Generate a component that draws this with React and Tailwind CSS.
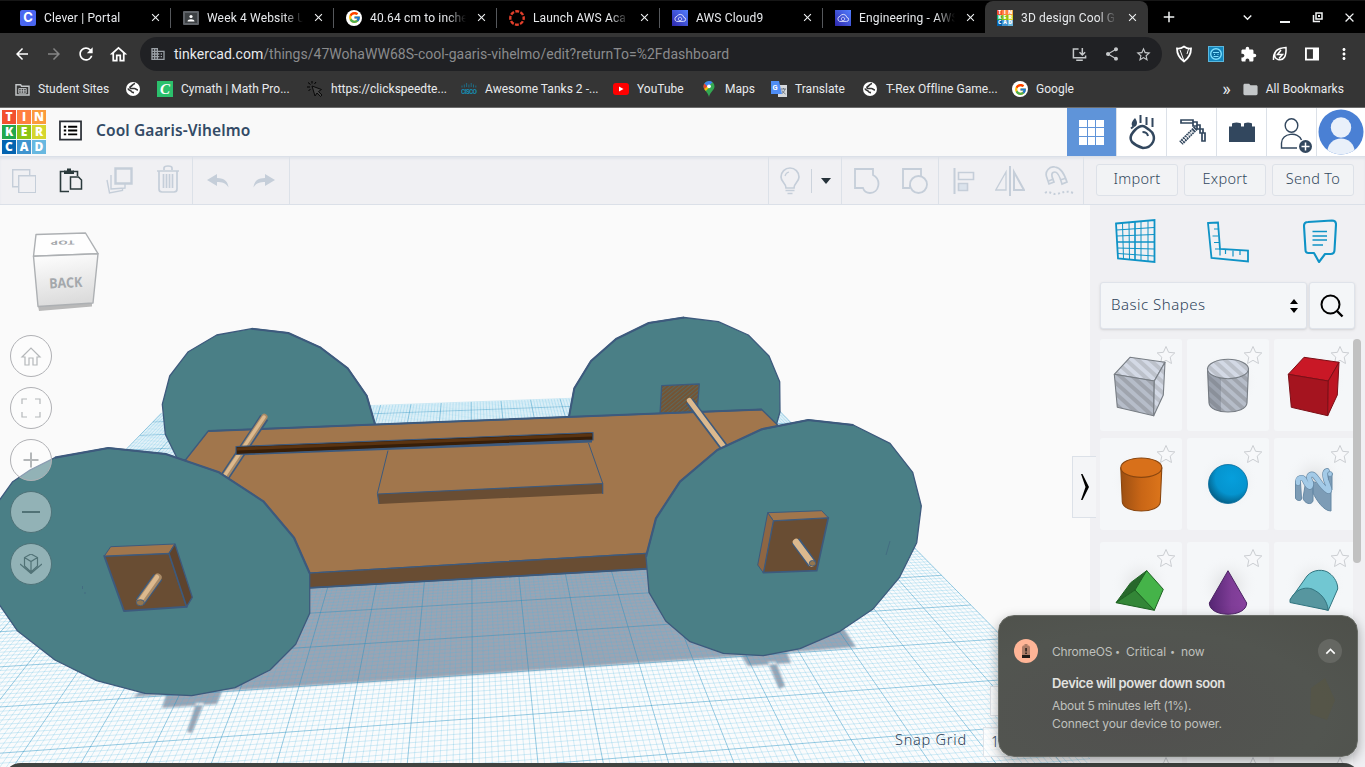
import React from "react";
import { FcGoogle } from "react-icons/fc";
import {
  MdArrowBack, MdArrowForward, MdRefresh, MdOutlineHome, MdDomain, MdShare,
  MdStarBorder, MdExtension, MdFolder, MdMoreVert, MdClose, MdAdd,
  MdKeyboardArrowDown, MdKeyboardArrowUp,
} from "react-icons/md";

const TILES = [
  ["T", "bg-[#f2502f]"], ["I", "bg-[#ff7f3f]"], ["N", "bg-[#fb9b3c]"],
  ["K", "bg-[#22a84c]"], ["E", "bg-[#8cc414]"], ["R", "bg-[#d6d62e]"],
  ["C", "bg-[#0464b0]"], ["A", "bg-[#3f94cf]"], ["D", "bg-[#68b8e0]"],
];

function TinkerLogo({ small }) {
  return (
    <div className={small ? "grid h-4 w-4 grid-cols-3" : "grid h-[44px] w-[44px] grid-cols-3 gap-px"}>
      {TILES.map(([c, bg]) => (
        <div key={c} className={`${bg} flex items-center justify-center font-['Open_Sans',sans-serif] font-extrabold text-white ${small ? "text-[5px] leading-[5px]" : "text-[12px] leading-none"}`}>
          {c}
        </div>
      ))}
    </div>
  );
}

function CloudFav() {
  return (
    <svg viewBox="0 0 16 16" className="h-4 w-4">
      <defs><linearGradient id="aws" x1="0" y1="1" x2="1" y2="0"><stop offset="0" stopColor="#2e27ad" /><stop offset="1" stopColor="#527fff" /></linearGradient></defs>
      <rect width="16" height="16" fill="url(#aws)" />
      <path d="M4.600 11.400h6.800a2 2 0 0 0 .4-4 3.600 3.600 0 0 0-6.800-1 2.600 2.600 0 0 0-.4 5z" fill="none" stroke="#e8ebff" strokeWidth="0.9" />
      <path d="M8 7l1.600 1v1.800L8 10.800 6.400 9.800V8z" fill="none" stroke="#e8ebff" strokeWidth="0.7" />
    </svg>
  );
}

const favs = {
  clever: (
    <div className="flex h-4 w-4 items-center justify-center rounded-[2px] bg-[#4a66f0] font-['Inter',sans-serif] text-[13px] font-bold leading-none text-white">C</div>
  ),
  classroom: (
    <svg viewBox="0 0 16 16" className="h-4 w-4"><rect y="1" width="16" height="14" rx="1" fill="#5f6368" /><rect x="2" y="3" width="12" height="10" fill="#3c4043" /><circle cx="8" cy="6.500" r="1.600" fill="#fff" /><path d="M4.500 11.500c0-3 7-3 7 0z" fill="#fff" /></svg>
  ),
  google: (
    <div className="flex h-4 w-4 items-center justify-center rounded-full bg-white"><FcGoogle size={13} /></div>
  ),
  canvas: (
    <svg viewBox="0 0 16 16" className="h-4 w-4"><circle cx="8" cy="8" r="6.700" fill="none" stroke="#e13f2b" strokeWidth="2.400" strokeDasharray="3.900 1.360" strokeDashoffset="1.900" /></svg>
  ),
  aws: <CloudFav />,
  tinker: <TinkerLogo small />,
};

const TABS = [
  ["clever", "Clever | Portal"], ["classroom", "Week 4 Website U"], ["google", "40.64 cm to inche"],
  ["canvas", "Launch AWS Aca"], ["aws", "AWS Cloud9"], ["aws", "Engineering - AWS"], ["tinker", "3D design Cool G"],
];

function Tab({ fav, title, active, divider }) {
  return (
    <div className={`flex h-[33px] w-[163px] items-center ${active ? "-ml-px rounded-t-[8px] bg-[#353535] pl-3" : "pl-3"}`}>
      <div className="shrink-0">{favs[fav]}</div>
      <div className="ml-2 w-[96px] whitespace-nowrap text-[12px] tracking-[0.15px] text-[#e8eaed] [mask-image:linear-gradient(to_right,#000_80%,transparent)]">{title}</div>
      <MdClose size={13} className="ml-[9px] text-[#f1f3f4]" />
      {divider && <div className="ml-auto h-5 w-px bg-[#55585c]" />}
    </div>
  );
}

function Globe() {
  return (
    <svg viewBox="0 0 14 14" className="h-[14px] w-[14px]"><circle cx="7" cy="7" r="7" fill="#fff" /><path d="M9 1.500C6.500 2 6 4 4.500 4.500c-1 .5-.5 2 .5 2h3.500c1.500 0 1.500 1.500 3.500 1.500M2 6.500c1 2.500 3 1.500 3.500 3 .4 1 1.500 1 2.500 1.200" fill="none" stroke="#353535" strokeWidth="1.700" /></svg>
  );
}

function Mark({ icon, text, w }) {
  return (
    <div className="flex shrink-0 items-center whitespace-nowrap" style={{ width: w }}>
      <div className="flex w-4 justify-center">{icon}</div>
      <span className="ml-2">{text}</span>
    </div>
  );
}

function BrowserChrome() {
  return (
    <header className="h-[108px] bg-[#353535] font-['Roboto',sans-serif]">
      <div className="flex h-[33px] border-t border-[#161616] bg-black pb-[2px] pl-2">
        {TABS.map(([f, t], i) => <Tab key={i} fav={f} title={t} active={i === 6} divider={i < 5} />)}
        <div className="flex flex-1 items-center pl-[12px] pt-[2px] text-[#f1f3f4]">
          <MdAdd size={18} />
          <MdKeyboardArrowDown size={17} className="ml-[61px]" />
          <div className="ml-[24px] mt-[9px] h-[2px] w-[10px] bg-[#f1f3f4]" />
          <svg viewBox="0 0 11 11" className="ml-[22px] h-[11px] w-[11px]"><path d="M1.500 3v6.500H8" stroke="#f1f3f4" strokeWidth="1.500" fill="none" /><rect x="4" y="1" width="6" height="6" fill="none" stroke="#f1f3f4" strokeWidth="1.500" /><rect x="6" y="3" width="2" height="2" fill="#f1f3f4" /></svg>
          <MdClose size={15} className="ml-[19px]" />
        </div>
      </div>
      <div className="flex h-[41px] items-center pl-[13px] pt-[1px] text-white">
        <MdArrowBack size={18} />
        <MdArrowForward size={18} className="ml-[14px] text-[#858585]" />
        <MdRefresh size={20} className="ml-[13px]" />
        <MdOutlineHome size={21} className="ml-[12px]" />
        <div className="ml-[11px] flex h-[34px] w-[1022px] items-center rounded-full bg-[#202124] pl-[10px] pr-[10px]">
          <MdDomain size={16} className="text-[#9aa0a6]" />
          <div className="ml-[8px] flex-1 text-[14px] tracking-[0.03px] text-[#8a8b8d]"><span className="text-[#e8eaed]">tinkercad.com</span>/things/47WohaWW68S-cool-gaaris-vihelmo/edit?returnTo=%2Fdashboard</div>
          <svg viewBox="0 0 16 16" className="h-[15px] w-[15px]"><path d="M7 2H1.500v9.500h13V9M4.500 14h7M11 1v7M8 5.500l3 3 3-3" fill="none" stroke="#c4c7c9" strokeWidth="1.600" /></svg>
          <MdShare size={16} className="ml-[17px] text-[#c4c7c9]" />
          <MdStarBorder size={17} className="ml-[15px] text-[#c4c7c9]" />
        </div>
        <svg viewBox="0 0 18 18" className="ml-[13px] h-[18px] w-[18px]"><path d="M2 3.500C5 4 7 3 9 1.500c2 1.500 4 2.500 7 2 0 5-2 9.500-7 13-5-3.500-7-8-7-13z" fill="none" stroke="#fff" strokeWidth="1.800" /><path d="M5 5l4 11M13.500 4L12 9" stroke="#fff" strokeWidth="1" /></svg>
        <svg viewBox="0 0 16 16" className="ml-[15px] h-4 w-4"><rect x=".5" y=".5" width="15" height="15" fill="#1487bd" stroke="#5ab7de" /><circle cx="8" cy="8" r="5.300" fill="#0a6a9d" stroke="#7fe0ff" strokeWidth="1.400" /><path d="M5 6.500h6M6 8.500h1M9.500 8.500h1M5.500 10.500h5" stroke="#7fe0ff" strokeWidth="1" /></svg>
        <MdExtension size={17} className="ml-[16px]" />
        <svg viewBox="0 0 16 16" className="ml-[15px] h-4 w-4"><path d="M1.500 14C1 6 5 2 14 1.500 14.500 10 12 15 6 13.500 1 12 2 5 7 3M9 4L5.500 8.500h5L7 12.500" fill="none" stroke="#fff" strokeWidth="1.500" /></svg>
        <svg viewBox="0 0 15 14" className="ml-[17px] h-[14px] w-[14px]"><path d="M1 1h13v12H1z" fill="none" stroke="#fff" strokeWidth="2" /><path d="M8.500 1H14v12H8.500z" fill="#fff" /></svg>
        <MdMoreVert size={18} className="ml-[16px]" />
      </div>
      <div className="flex h-[34px] items-center border-b border-[#6c6c6c] pb-[3px] pl-[14px] text-[12px] tracking-[0.02px] text-[#e8eaed]">
        <Mark w={111} icon={<svg viewBox="0 0 16 14" className="h-[13px] w-[15px]"><path d="M1 2h5l1 1.500h8V13H1z" fill="none" stroke="#c4c7c9" strokeWidth="1.600" /><path d="M4 6h8v5H4zM4 8.500h8M6.600 6v5M9.300 6v5" fill="none" stroke="#c4c7c9" strokeWidth="1" /></svg>} text="Student Sites" />
        <Mark w={32} icon={<Globe />} text="" />
        <Mark w={150} icon={<div className="flex h-4 w-4 items-center justify-center bg-[#2bc06c] font-['Liberation_Serif',serif] text-[15px] font-bold italic leading-none text-white">C</div>} text="Cymath | Math Pro..." />
        <Mark w={154} icon={<svg viewBox="0 0 16 16" className="h-4 w-4"><path d="M5 5l3 10 2-3 3.500 3.500 1.500-1.500-3.500-3.500L14.500 8.500z" fill="#444" stroke="#0a0a0a" strokeWidth="1" /><path d="M0 6h3M5 0v2.500M1 1.500l2.500 2M9 1L7.500 3M1.500 10L3.500 8" stroke="#000" strokeWidth="1" /></svg>} text="https://clickspeedte..." />
        <Mark w={152} icon={<svg viewBox="0 0 16 12" className="h-3 w-4"><path d="M1 2.500v2M3.300 1.500v3M5.600 0v4M7.900 1.500v3M10.200 0v4M12.500 1.500v3M14.800 2.500v2" stroke="#1f6c85" strokeWidth="1" /><text x="0" y="11" fontSize="6.500" fontWeight="900" fill="#1885a8" textLength="16">CISCO</text></svg>} text="Awesome Tanks 2 -..." />
        <Mark w={88} icon={<svg viewBox="0 0 16 12" className="h-3 w-4"><rect width="16" height="12" rx="3" fill="#f00" /><path d="M6 3.500v5L10.500 6z" fill="#fff" /></svg>} text="YouTube" />
        <Mark w={70} icon={<svg viewBox="0 0 12 16" className="h-4 w-3"><path d="M6 0a5.500 5.500 0 0 0-5.500 5.500C.5 9 5 11 6 16c1-5 5.500-7 5.500-10.500A5.500 5.500 0 0 0 6 0z" fill="#34a853" /><path d="M6 0A5.500 5.500 0 0 0 1.300 2.600L4.500 6 9.500 1.200A5.500 5.500 0 0 0 6 0z" fill="#4285f4" /><path d="M1.300 2.600A5.500 5.500 0 0 0 1.200 8L4.500 5.500z" fill="#ea4335" /><path d="M1.200 8l1.600 2L7.500 5 5 5z" fill="#fbbc04" /><circle cx="6" cy="5.300" r="1.900" fill="#fff" /></svg>} text="Maps" />
        <Mark w={91} icon={<svg viewBox="0 0 16 16" className="h-4 w-4"><rect x="7" y="4" width="9" height="12" fill="#d5d8dc" /><path d="M0 0h8l3 13H0z" fill="#4f8df5" /><text x="1.500" y="9" fontSize="7.500" fontWeight="700" fill="#fff">G</text><path d="M10 8h5M12.500 7v1M14 8c-.5 2-2 4-3 4.500M11 9.500c.5 1 2 2.500 3.500 3.500" stroke="#5f6a76" strokeWidth=".9" fill="none" /></svg>} text="Translate" />
        <Mark w={150} icon={<Globe />} text="T-Rex Offline Game..." />
        <Mark w={90} icon={favs.google} text="Google" />
        <span className="ml-auto text-[18px] leading-none">»</span>
        <MdFolder size={17} className="ml-[11px] text-[#c4c7c9]" />
        <span className="ml-[7px] mr-[21px] tracking-[0.08px]">All Bookmarks</span>
      </div>
    </header>
  );
}

const sep = "border-r border-[#dce1e8]";

function TitleBar() {
  return (
    <div className="flex h-[48px] bg-[#f9f9f9]">
      <div className="pl-[2px] pt-[2px]"><TinkerLogo /></div>
      <svg viewBox="0 0 24 21" className="ml-[13px] mt-[12px] h-[21px] w-[23px]"><path d="M1 1h22v19H1z" fill="#fff" stroke="#2a2f36" strokeWidth="1.800" /><path d="M5 6.500h2.500M5 10.500h2.500M5 14.500h2.500M9.500 6.500H19M9.500 10.500H19M9.500 14.500H19" stroke="#000" strokeWidth="2" /></svg>
      <div className="ml-[14px] pt-[11px] text-[15.5px] font-semibold leading-[23px] tracking-[0.1px] text-[#334b66]">Cool Gaaris-Vihelmo</div>
      <div className="ml-auto flex">
        <div className="flex w-[50px] items-center justify-center border-r border-[#dce1e8] bg-[#5f94d9]">
          <div className="grid h-[25px] w-[25px] grid-cols-3 gap-px">{TILES.map(([c]) => <div key={c} className="bg-white" />)}</div>
        </div>
        <div className={`flex w-[50px] items-center justify-center bg-white ${sep}`}>
          <svg viewBox="0 0 28 36" className="h-[36px] w-[28px]"><path d="M14.500 12c3 0 4 2.500 7 4 4 2.500 5.500 8 3.500 12-2 4-6 6-10 6-4-1-8-3-11-6-3-4 0-9 3-12s4.500-4 7.500-4z" fill="none" stroke="#32475e" strokeWidth="2.500" /><path d="M14.500 18c3 0 5 1.500 5.500 4" fill="none" stroke="#32475e" strokeWidth="2" /><path d="M7 4c3 4 2.500 8-1 9-3.500-1-3-5 1-9z" fill="#32475e" /><path d="M3 14.500l2.500-2M12.500 1v8M18.500 3v8M24.500 4v9" stroke="#32475e" strokeWidth="2" /></svg>
        </div>
        <div className={`flex w-[50px] items-center justify-center bg-white ${sep}`}>
          <svg viewBox="0 0 30 30" className="h-[30px] w-[30px]" fill="none" stroke="#32475e"><path d="M4 3h12v2h4v3h3v4h3v4h2v8h-3v-8h-2v-4h-3V9h-4V6H4z" strokeWidth="1.700" /><path d="M19 11L4 26" strokeWidth="5" strokeDasharray="1.800 0.700" /><path d="M15.500 14.500L5 25" stroke="#fff" strokeWidth="1.700" strokeDasharray="1.800 1" /></svg>
        </div>
        <div className={`flex w-[50px] items-center justify-center bg-white ${sep}`}>
          <svg viewBox="0 0 26 20" className="h-[20px] w-[26px]"><path d="M0 4.500h3V2q0-1.500 4.500-1.500T12 2v2.500h3V2q0-1.500 4-1.500T23 2v2.500h3V20H0z" fill="#32475e" /></svg>
        </div>
        <div className={`flex w-[50px] items-center justify-center bg-white ${sep}`}>
          <svg viewBox="0 0 34 36" className="ml-[8px] mt-[5px] h-[36px] w-[34px]"><ellipse cx="12.500" cy="8.500" rx="6.300" ry="6.800" fill="none" stroke="#32475e" strokeWidth="1.400" /><path d="M18 31H2.500v-5c0-10 17-12 20-3" fill="none" stroke="#32475e" strokeWidth="1.400" /><circle cx="26.500" cy="29.500" r="6.500" fill="#32475e" /><path d="M26.500 25.500v8M22.500 29.500h8" stroke="#fff" strokeWidth="1.500" /></svg>
        </div>
        <div className="flex w-[48px] items-center justify-center bg-white">
          <svg viewBox="0 0 46 46" className="h-[46px] w-[46px]"><defs><clipPath id="av"><circle cx="23" cy="23" r="22.500" /></clipPath></defs><circle cx="23" cy="23" r="22.500" fill="#4a80d4" /><g clipPath="url(#av)" fill="#e9f0fa"><circle cx="23" cy="18.500" r="10.200" /><ellipse cx="23" cy="42" rx="13.500" ry="12.500" /></g></svg>
        </div>
      </div>
    </div>
  );
}

const G = "#c5ced9";

function Button({ children }) {
  return <div className="flex h-[32px] w-[82px] items-center justify-center rounded-[3px] border border-[#dde1e8] bg-[#f2f3f5] pb-[3px] text-[14.5px] font-light tracking-[0.3px] text-[#34495e]">{children}</div>;
}

function ToolBar() {
  return (
    <div className="flex h-[49px] border-b border-t border-[#dbe0e8] bg-[#f0f0f3] shadow-[inset_0_2px_2px_rgba(200,210,222,0.35)]">
      <div className={`flex w-[193px] items-center pl-[12px] ${sep}`}>
        <svg viewBox="0 0 24 24" className="h-6 w-6" fill="#f0f0f3" stroke={G} strokeWidth="1.400"><path d="M.7.700h17v17H.7z" /><path d="M6.700 6.700h17v17h-17z" /></svg>
        <svg viewBox="0 0 24 25" className="ml-[23px] h-[25px] w-6" fill="none" stroke="#2b3a3c"><path d="M10 23.500H1.500V3.500H6M14 3.500h4.500V8" strokeWidth="1.600" /><path d="M11.500 9h8l3 3v9h-11z" fill="#f0f0f3" strokeWidth="1.500" /><path d="M5 2.500h3V.5h4v2h3V6H5z" fill="#2b3a3c" stroke="none" /></svg>
        <svg viewBox="0 0 28 27" className="ml-[23px] h-[27px] w-7" fill="#f0f0f3" stroke={G} strokeWidth="1.400"><path d="M1 13l2.500 13 13-2.500V12" /><path d="M5 8v14l14-1V8" /><path d="M9.500 1.500h16v15h-16z" strokeWidth="2.400" /></svg>
        <svg viewBox="0 0 22 28" className="mb-1 ml-[23px] h-[28px] w-[22px]" fill="none" stroke={G} strokeWidth="1.700"><path d="M0 6h22M2 6v18q0 3 3 3h12q3 0 3-3V6M7 5V3q0-2 4-2t4 2v2M6.500 9v14M9.500 9v14M12.500 9v14M15.500 9v14" /></svg>
      </div>
      <div className={`flex w-[97px] items-center pl-[14px] ${sep}`}>
        <svg viewBox="0 0 22 14" className="h-[14px] w-[22px]"><path d="M0 6L10 0v4c8 0 11 4 11.500 9.500C19 9 15 8 10 8v4z" fill={G} /></svg>
        <svg viewBox="0 0 22 14" className="ml-[24px] h-[14px] w-[22px]"><path d="M22 6L12 0v4C4 4 1 8 .5 13.500 3 9 7 8 12 8v4z" fill={G} /></svg>
      </div>
      <div className="ml-auto flex w-[74px] items-center border-l border-[#dce1e8] pl-[11px]">
        <svg viewBox="0 0 20 28" className="h-[28px] w-5" fill="none" stroke={G} strokeWidth="1.700"><path d="M6 21c0-5-5-6-5-11a9 9 0 0 1 18 0c0 5-5 6-5 11zM5.500 23.500h9M7.500 26.500h5" /><path d="M5 9c.5-2 2-3.500 4-4" strokeWidth="1.200" /></svg>
        <div className="ml-[11px] h-6 w-px bg-[#ccd3dc]" />
        <div className="ml-[9px] h-0 w-0 border-x-[5px] border-t-[6px] border-x-transparent border-t-[#26323a]" />
      </div>
      <div className={`-ml-px flex w-[98px] items-center border-l border-[#dce1e8] pl-[12px] ${sep}`}>
        <svg viewBox="0 0 26 26" className="h-[26px] w-[26px]" fill="none" stroke={G} strokeWidth="1.800"><path d="M1 1h18v6c9 5 6 18-3 18-4 0-6-2-7-5H1z" /></svg>
        <svg viewBox="0 0 26 26" className="ml-[22px] h-[26px] w-[26px]" fill="none" stroke={G} strokeWidth="1.800"><path d="M8 20H1V1h18v6" /><circle cx="16.500" cy="16.500" r="8.500" /><path d="M8 20v-3M19 7v2" /></svg>
      </div>
      <div className={`flex w-[145px] items-center pl-[14px] ${sep}`}>
        <svg viewBox="0 0 22 26" className="h-[26px] w-[22px]" fill="none" stroke={G} strokeWidth="1.600"><path d="M1.500 0v26" strokeWidth="2" /><path d="M5.500 4.500h15v7h-15z" /><path d="M5.500 15.500h9v7h-9z" fill="#dbe3ec" /></svg>
        <svg viewBox="0 0 30 30" className="ml-[20px] h-[30px] w-[30px]" fill="none" stroke={G} strokeWidth="1.300"><path d="M15 0v30" strokeWidth="2" /><path d="M11 6v18H.8z" /><path d="M19 6v18h10z" strokeWidth="2" /></svg>
        <svg viewBox="0 0 30 29" className="ml-[19px] h-[29px] w-[30px]" fill="none" stroke={G} strokeWidth="1.700"><path d="M3 12C0 5 6 0 11 1c6 1 9 6 12 15l-5 2c-2-7-4-12-7-12-4 0-4 3 -1 10l-5 2z" /><path d="M16 14l5-1.500M4.500 15l5-2" /><path d="M1 27c4-3 7 2 12 1s8-4 16-1" strokeDasharray="2 2.500" strokeWidth="2" /></svg>
      </div>
      <div className="flex w-[281px] items-start gap-[6px] pl-[12px] pt-[7px]"><Button>Import</Button><Button>Export</Button><Button>Send To</Button></div>
    </div>
  );
}

/* Perspective projection of the workplane: u runs right, v runs toward the viewer. */
const A = 0.00343, B = 0.0368;
function project(u, v) {
  const w = 1 + u * A - v * B;
  return [(560 + u * A * 9100 - v * B * 470) / w, (398.7 + u * A * 87 - v * B * 97) / w - 205];
}
function line(a, b) {
  const p = project(...a), q = project(...b);
  return `M${p[0].toFixed(1)} ${p[1].toFixed(1)}L${q[0].toFixed(1)} ${q[1].toFixed(1)}`;
}
const minor = [], major = [];
for (let i = 0; i <= 200; i++) {
  const u = -13 + i / 10;
  (i % 10 === 0 ? major : minor).push(line([u, 0], [u, 20]));
  const v = -0.3 + i / 10;
  if (v >= 0) (i % 10 === 0 ? major : minor).push(line([-13, v], [7, v]));
}
const plane = [[-13, 0], [7, 0], [7, 20], [-13, 20]].map(([u, v]) => project(u, v).join(",")).join(" ");

const E = "#3d5a7d", TEAL = "#4a7f86", TOP = "#a1764c", SIDE = "#694d33";

function Scene() {
  return (
    <svg viewBox="0 0 1090 562" className="block h-[562px] w-[1090px]">
      <defs>
        <pattern id="hatch" width="3" height="3" patternUnits="userSpaceOnUse" patternTransform="rotate(-40)"><rect width="3" height="3" fill="#77522f" /><rect width="3" height="1.200" fill="#5c675b" /></pattern>
        <filter id="soft"><feGaussianBlur stdDeviation="1" /></filter>
        <linearGradient id="cube" x1="0" y1="0" x2="0.2" y2="1"><stop offset="0" stopColor="#fff" /><stop offset="1" stopColor="#dcdcdc" /></linearGradient>
      </defs>
      <polygon points={plane} fill="#fafbfc" />
      <g transform="translate(0 -205)" fill="#9ba4b3" filter="url(#soft)">
        <path d="M133 697L400 680 640 663 740 656.500 856 647 842 626 760 600 660 560 290 580 180 660z" />
        <path d="M166 695l-4 13 55-4 5-13zM196 703h8l-12 30-5-1zM740 654l8 12 43-3-5-13zM768 662h8l9 24-6 3z" />
      </g>
      <path d={minor.join("")} stroke="#4cb8e0" strokeOpacity="0.34" strokeWidth="0.700" fill="none" />
      <path d={major.join("")} stroke="#2492c2" strokeOpacity="0.520" strokeWidth="0.900" fill="none" />
      <g transform="translate(0 -205)" stroke={E} strokeLinejoin="round" strokeWidth="1.300">
        <polygon fill={TEAL} points="188.300,351.700 216.700,335 251.700,328.700 288.300,333 320.700,347.700 347.700,368.300 366.700,395.700 375,424.300 375,460 178,460 165.300,434.300 162.300,404.300 169.700,376" />
        <path d="M251.700 328.700l36.600 4.300 32.400 14.700 27 20.600 19 27.400 8.300 28.600" fill="none" strokeWidth="2" />
        <polygon fill={TEAL} points="569,416.700 574.300,388.300 591,361 616,339 648.700,323 684,317.500 718.300,321.700 748.300,335 769,356 779.700,381.700 780,411.700 776,426 700,440" />
        <path d="M569 416.700l5.300-28.400L591 361l25-22 32.700-16 35.300-5.500" fill="none" strokeWidth="2" />
        <polygon fill="url(#hatch)" points="661.700,385.700 699.300,384 697,413 660,414" />
        <polygon fill={TOP} points="208.300,431 761.700,409.500 800,447 660,552.600 300,573.700 150,505" />
        <polygon fill={SIDE} points="300,573.700 660,552.600 660,568 300,588.300" />
        <path d="M208.300 431l553.400-21.500" strokeWidth="2" />
        <path d="M300 588.300L660 568" strokeWidth="1.800" />
        <g fill="none" strokeLinecap="round">
          <path d="M264.300 417.500L222 481" strokeWidth="9.500" strokeLinecap="butt" />
          <path d="M264.300 417L222 481" stroke="#a98a66" strokeWidth="6.500" />
          <path d="M264 417L221 481" stroke="#dcb98e" strokeWidth="3.500" />
          <path d="M689.300 401L727 451" strokeWidth="8.500" strokeLinecap="butt" />
          <path d="M689.300 400.500L727 451" stroke="#dcb98e" strokeWidth="5" />
        </g>
        <polygon fill={TOP} stroke="none" points="388,450 588.500,443 602.700,483.300 377.500,494" />
        <path d="M388 450.500l-10.700 43.200M588.500 443l14.200 40.300" fill="none" strokeWidth="1" />
        <path d="M243 454L592 441.300" strokeWidth="2.500" />
        <polygon fill={SIDE} stroke="none" points="377.500,494 602.700,483.500 603,493.500 379,504" />
        <path d="M379 504l-1.500-10L602.700 483.500V494" fill="none" strokeWidth="1.200" />
        <polygon fill="#371e08" points="236,446.500 593,432.500 593,440 236,454.500" strokeWidth="1.200" />
        <path d="M237 449L592 435" stroke="#5a3310" strokeWidth="3" />
        <polygon fill={TEAL} points="-5,506 0,499.300 12.700,481.700 30,470 55,457.700 108.300,448 165.700,454 219,472.300 263.300,501.300 294,537.700 309.700,573.300 309.700,613.300 295.700,644.300 270,670 235,687.700 191.700,695.700 145,693.300 96.700,680.700 55,660 17.300,630.700 0,605.700 -5,598" />
        <path d="M55 457.700l53.300-9.700 57.400 6 53.300 18.300 44.300 29 30.700 36.400 15.700 35.600" fill="none" strokeWidth="2.200" />
        <polygon fill={TEAL} points="808.300,420 853.300,425 890,443.300 912.700,472.300 921.300,506 916.700,542.700 899.300,577.700 872.700,609.300 840,631.300 800,648.700 763.300,655.700 723.300,653.300 690,641.700 665.700,621 649,592.300 646,556.700 656,518.300 680,481.700 717.300,450 761.700,429.300" />
        <path d="M853.300 425l-45-5-46.600 9.300-44.400 20.700-37.300 31.700-24 36.600-10 38.400" fill="none" strokeWidth="2.200" />
        <path d="M890 541l-4 14M82.500 586v3M85 592v2" strokeWidth=".5" />
        <polygon fill={SIDE} points="104.300,556 169,553.300 186.700,606.700 124,611" strokeWidth="2" />
        <polygon fill={TOP} points="104.300,556 110.700,546.700 175,544 169,553.300" strokeWidth="1" />
        <polygon fill="#5e432d" points="169,553.300 175,544 192.300,597.300 186.700,606.700" strokeWidth="1.300" />
        <polygon fill={SIDE} points="773.300,520.700 828.300,517.700 816.700,570.700 763.300,572.700" strokeWidth="1.700" />
        <polygon fill={TOP} points="767.700,512.700 821.700,510.700 828.300,517.700 773.300,520.700" strokeWidth="1" />
        <polygon fill="#8e6643" points="767.700,512.700 773.300,520.700 763.300,572.700 757.700,565" strokeWidth="1" />
        <g fill="none" strokeLinecap="round">
          <path d="M158 577l-18 25" strokeWidth="10.500" strokeLinecap="butt" />
          <path d="M157.700 577.500l-17.200 24" stroke="#a98a66" strokeWidth="8" />
          <path d="M157 577l-17 24" stroke="#dcb98e" strokeWidth="4.500" />
          <path d="M795.700 541l16.600 23" strokeWidth="9.500" strokeLinecap="butt" />
          <path d="M796 542l16 21.500" stroke="#dcb98e" strokeWidth="6.500" />
        </g>
        <ellipse cx="140.300" cy="602.700" rx="4" ry="3" fill="#94764f" strokeWidth=".9" />
        <ellipse cx="812.500" cy="563.300" rx="3.200" ry="2.800" fill="#94764f" strokeWidth=".9" />
      </g>
      <g transform="translate(0 -205)" stroke="#adb0b3" strokeWidth="1.400" strokeLinejoin="round">
        <path d="M38 306l54-3v3.500L39 311z" fill="#b9b9b9" stroke="none" />
        <path d="M36 234.500l49.500-1.500L98 253.700l-64.500 2.500z" fill="#fefefe" />
        <path d="M33.500 256.200L98 253.700 93 303l-55 3.500z" fill="url(#cube)" />
        <text x="0" y="0" transform="translate(49.500 288.500) rotate(-3)" fontSize="14" fontWeight="700" fill="#a4a8ac" stroke="none" textLength="33" lengthAdjust="spacingAndGlyphs">BACK</text>
        <text x="0" y="0" transform="translate(74.500 240.500) rotate(179) scale(1 .62)" fontSize="9" fontWeight="700" fill="#a4a8ac" stroke="none" textLength="24" lengthAdjust="spacingAndGlyphs">TOP</text>
      </g>
    </svg>
  );
}

const NAV = [
  "M1 11L10 2l9 9h-3v8h-4v-7H8v7H4v-8z",
  "M1 6V1h5M14 1h5v5M19 14v5h-5M6 19H1v-5",
  "M10 2.500v15M2.500 10h15",
  "M1 10h18",
  "M-1 10l11 9.500L21 10M10 0l6.500 3.500v8.500L10 18l-6.500-6V3.500zM3.500 3.500L10 7.500l6.500-4M10 7.500V18",
];

function Viewport() {
  return (
    <main className="relative h-[562px] w-[1090px] bg-[#fafafa]">
      <Scene />
      <div className="absolute left-[10px] top-[130px] flex flex-col gap-[10px]">
        {NAV.map((d, i) => (
          <div key={i} className={`flex h-[42px] w-[42px] items-center justify-center rounded-full border bg-white/40 ${i > 2 ? "border-[#4e7278]" : "border-[#b0b1b5]"}`}>
            <svg viewBox="-1 0 22 20" className="h-5 w-[22px]" fill="none" stroke={i > 2 ? "#517276" : "#b4b7b9"} strokeWidth={i === 2 || i === 3 ? 2 : 1.2}><path d={d} /></svg>
          </div>
        ))}
      </div>
      <div className="absolute left-[990px] top-[481px] h-[30px] w-[90px] border border-[#dfe3e8] bg-white/80" />
      <div className="absolute bottom-[10px] left-[895px] flex h-[30px] items-center text-[14.500px] font-light tracking-[0.75px] text-[#2d4055]">
        <span className="w-[88px] pb-[4px]">Snap Grid</span>
        <span className="flex h-[30px] w-[90px] items-center border border-[#dfe3e8] bg-white/70 pb-[2px] pl-[7px] text-[14px]">1.0 mm</span>
      </div>
      <div className="absolute left-[1072px] top-[251px] flex h-[62px] w-[24px] items-center justify-center border border-r-0 border-[#dce1e8] bg-[#f4f5f7]">
        <svg viewBox="0 0 8 26" className="ml-px h-[26px] w-2"><path d="M0 0h1.500L8 13 1.500 26H0L4.500 13z" fill="#000" /></svg>
      </div>
    </main>
  );
}

const SHAPES = {
  box: (
    <g stroke="#777d84" strokeWidth="1.100" strokeLinejoin="round">
      <path d="M30 18.300l35 5-10.700 18.700-40-6.700z" fill="url(#stA)" /><path d="M14.300 35.300l40 6.700-.6 34.700-36.400-8.400z" fill="url(#stB)" /><path d="M65 23.300L54.300 42l-.6 34.700L63.300 56z" fill="url(#stA)" />
    </g>
  ),
  cyl: (
    <g stroke="#777d84" strokeWidth="1.100"><path d="M20.500 30l1.500 34c1 12 37 12 38 0l1.500-34z" fill="url(#stB)" /><path d="M20.500 30l1.500 34c1 4 5 7 12 8.500V36z" fill="#555d69" fillOpacity=".28" stroke="none" /><ellipse cx="41" cy="30" rx="20.500" ry="9.700" fill="url(#stA)" /></g>
  ),
  red: (
    <g stroke="#7c0f17" strokeWidth="1" strokeLinejoin="round"><path d="M30 18.300l35 5-10.700 18.700-40-6.700z" fill="#c91826" /><path d="M14.300 35.300l40 6.700-.6 34.700-36.400-8.400z" fill="#a5141f" /><path d="M65 23.300L54.300 42l-.6 34.700L63.300 56z" fill="#bd1522" /></g>
  ),
  orange: (
    <g stroke="#8a460f" strokeWidth="1.100"><path d="M20.800 30l1.500 34c1 12 37 12 38 0l1.500-34z" fill="url(#or)" /><ellipse cx="41.300" cy="29.700" rx="20.500" ry="9.700" fill="#d8701a" /></g>
  ),
  sphere: <circle cx="41" cy="46" r="19.500" fill="url(#sp)" stroke="#046a9c" strokeWidth=".8" />,
  scribble: (
    <g strokeLinejoin="round" strokeLinecap="round">
      <path d="M21.500 44v16c0 2 5 4 6 1l-1-17zM31 48l-2 12c1 5 8 8 10 3V48zM39 44v11c3 6 10 18 18 18V51z" fill="#7d9cb6" stroke="#6789a5" strokeWidth="1" />
      <path d="M54.500 36v16h3.500V36z" fill="#7d9cb6" stroke="#6789a5" strokeWidth="1" />
      <path d="M24 45c-1-6 5-7 7-2 3 6 6 8 6 3 0-4-4-6-1-9 3-2 5 1 8 5 4 6 7 9 10 11 3 1 0-6-2-11-1-4-2-8 1-9" fill="none" stroke="#6789a5" strokeWidth="5.600" />
      <path d="M24 45c-1-6 5-7 7-2 3 6 6 8 6 3 0-4-4-6-1-9 3-2 5 1 8 5 4 6 7 9 10 11 3 1 0-6-2-11-1-4-2-8 1-9" fill="none" stroke="#a3cae7" strokeWidth="4.400" />
      <circle cx="56" cy="36" r="2.500" fill="#a3cae7" stroke="#6789a5" strokeWidth=".7" />
    </g>
  ),
  roof: (
    <g stroke="#1d6322" strokeWidth="1" strokeLinejoin="round"><path d="M46.700 28.700L35 48 16 60.700l14.700-20z" fill="#27682b" /><path d="M35 48l19.300 20.300L16 60.700z" fill="#338637" /><path d="M46.700 28.700l16.600 18.600-9 21L35 48z" fill="#45b349" /></g>
  ),
  cone: <path d="M41 28.700L22.300 61c0 15 37.400 15 37.400 0z" fill="url(#cn)" stroke="#4b2363" strokeWidth="1" strokeLinejoin="round" />,
  half: (
    <g stroke="#327580" strokeWidth="1" strokeLinejoin="round"><path d="M16 58L33 34c6-7 17-7 22-3 6 4 9 11 8.700 16l-9.400 21.300z" fill="#71c7d2" /><path d="M16 60.500V58c6-12 16-13 22-11 9 4 15 11 16.300 21.300z" fill="#57969f" /></g>
  ),
};

function Card({ shape }) {
  return (
    <div className="h-[92px] w-[82px] shrink-0 rounded-[3px] bg-[#f5f7f9]">
      <svg viewBox="0 0 82 92" className="block h-[92px] w-[82px]">
        {shape && <circle cx="41" cy="43" r="30" fill="url(#halo)" />}
        <path d="M66 7.500l2.600 5.800 6.200.6-4.600 4.300 1.300 6.300-5.500-3.200-5.500 3.200 1.300-6.300-4.600-4.300 6.200-.6z" fill="#f7f8fa" stroke="#cbced2" strokeWidth="1" />
        {shape && SHAPES[shape]}
      </svg>
    </div>
  );
}

function Row({ items }) {
  return <div className="flex gap-[5px]">{items.map((s, i) => <Card key={i} shape={s} />)}</div>;
}

function Sidebar() {
  const blue = "#0f93c6";
  return (
    <aside className="h-[562px] w-[275px] overflow-hidden bg-[#f0f0f3] pl-[10px]">
      <svg width="0" height="0" className="absolute">
        <defs>
          <pattern id="stA" width="8" height="8" patternUnits="userSpaceOnUse" patternTransform="rotate(-48)"><rect width="8" height="8" fill="#d3d9e5" /><rect width="4" height="8" fill="#bcc1ca" /></pattern>
          <pattern id="stB" width="8" height="8" patternUnits="userSpaceOnUse" patternTransform="rotate(-48)"><rect width="8" height="8" fill="#b6bdc9" /><rect width="4" height="8" fill="#9fa4ad" /></pattern>
          <linearGradient id="or"><stop offset="0" stopColor="#9c4f12" /><stop offset=".5" stopColor="#c96616" /><stop offset="1" stopColor="#dc751b" /></linearGradient>
          <linearGradient id="cn"><stop offset="0" stopColor="#552673" /><stop offset=".6" stopColor="#7f3d97" /><stop offset="1" stopColor="#88429f" /></linearGradient>
          <radialGradient id="sp" cx=".6" cy=".35" r=".7"><stop offset="0" stopColor="#069fdc" /><stop offset=".6" stopColor="#0594cf" /><stop offset="1" stopColor="#045a80" /></radialGradient>
          <radialGradient id="halo"><stop offset="0" stopColor="#d9dadb" /><stop offset="1" stopColor="#f5f7f9" stopOpacity="0" /></radialGradient>
        </defs>
      </svg>
      <div className="flex h-[77px] items-start pl-[15px] pt-[14px]">
        <svg viewBox="0 0 41 44" className="h-[44px] w-[41px]" fill="none" stroke={blue}><path d="M1 4.500L39.500 1v42L3 39.500z" strokeWidth="1.800" /><path d="M20 3v38M2 23h37" strokeWidth="1.600" /><path d="M7.500 4l1 36M14 3.500l.5 37M26 2v39.500M33 2v40M1.500 11L39 8.500M2 17l37-1.500M2.500 29L39 30M3 34.500l36 2.500" strokeWidth="1" /></svg>
        <svg viewBox="0 0 42 42" className="ml-[51px] mt-[2px] h-[42px] w-[42px]" fill="none" stroke={blue} strokeWidth="1.800"><path d="M1 2l10-.5L13 28l28 1.500v11L4.500 37z" /><path d="M7 8h4M5.500 15H11M7 21.500h5M13 28v6.500M13 28H8M18.500 29v4M26 29.500v6M33 30v4" strokeWidth="1.200" /></svg>
        <svg viewBox="0 0 34 44" className="ml-[54px] h-[44px] w-[34px]" fill="none" stroke={blue} strokeWidth="2.100" strokeLinejoin="round"><path d="M5 3l24-1.500q4 0 4 4L31.500 31q0 4-4 4H22l-6 8L11 34H5.500q-3 0-3-3L1 7q0-4 4-4z" /><path d="M9.500 12.500H24M9.500 17H24M9.500 21H24M9.500 26H20" strokeWidth="1.600" /></svg>
      </div>
      <div className="flex gap-[2px]">
        <div className="flex h-[47px] w-[207px] items-center rounded-[3px] border border-[#dfe3ea] bg-[#f4f6f8] pl-[10px] pr-[8px] text-[15px] font-light tracking-[0.5px] text-[#2f445a] shadow-sm">
          <span className="flex-1 pb-[2px]">Basic Shapes</span>
          <svg viewBox="0 0 8 14" className="h-[14px] w-2"><path d="M4 0l4 5H0zM4 14l4-5H0z" fill="#000" /></svg>
        </div>
        <div className="flex h-[47px] w-[46px] items-center justify-center rounded-[3px] border border-[#dfe3ea] bg-[#f4f6f8] shadow-sm">
          <svg viewBox="0 0 24 24" className="h-6 w-6" fill="none" stroke="#000"><circle cx="10.500" cy="10.500" r="9" strokeWidth="2" /><path d="M16.500 16.500l6 6" strokeWidth="2.400" /></svg>
        </div>
      </div>
      <div className="mt-[10px] flex">
        <div className="flex w-[253px] flex-col gap-[12px] overflow-hidden">
          <div className="flex flex-col gap-[7px]"><Row items={["box", "cyl", "red"]} /><Row items={["orange", "sphere", "scribble"]} /></div>
          <Row items={["roof", "cone", "half"]} />
          <Row items={[null, null, null]} />
          <Row items={[null, null, null]} />
        </div>
        <div className="h-[224px] w-[8px] rounded-full bg-[#c1c1c1]" />
      </div>
    </aside>
  );
}

function Notification() {
  return (
    <div className="absolute left-[998px] top-[615px] flex h-[142px] w-[360px] rounded-[16px] border border-[#686b65] bg-[radial-gradient(ellipse_at_40%_70%,#51504f,#525550_60%,#4e504a)] pl-[15px] pt-[23px] font-['Inter',sans-serif] text-[12px] text-[#bfc0bd] shadow-[0_4px_12px_rgba(0,0,0,0.35)]">
      <div className="flex h-6 w-6 items-center justify-center rounded-full bg-[#ffb597]">
        <svg viewBox="0 0 8 14" className="h-[14px] w-2"><path d="M0 3l1-1.500h1.500V0h3v1.500H7L8 3v11H0z" fill="#ad7c67" /><path d="M0 11h8v3H0zM3.300 4h1.500v3.500H3.300zM3.300 8.500h1.500V10H3.300z" fill="#201a17" /></svg>
      </div>
      <div className="ml-[14px] flex-1 whitespace-nowrap">
        <div className="flex h-6 pt-px leading-6">
          <span className="w-[63px] tracking-[-0.2px]">ChromeOS</span>
          <span className="w-[11px] text-[9px]">•</span>
          <span className="w-[44px] tracking-[0.05px]">Critical</span>
          <span className="w-[11px] text-[9px]">•</span>
          <span className="tracking-[-0.2px]">now</span>
        </div>
        <div className="mt-[11px] text-[13px] font-semibold leading-[18px] tracking-[-0.35px] text-[#e3e3e0]">Device will power down soon</div>
        <div className="mt-[5px] leading-[18px]"><span className="tracking-[-0.27px]">About 5 minutes left (1%).</span><br /><span className="tracking-[-0.13px]">Connect your device to power.</span></div>
      </div>
      <div className="mr-[15px] flex h-6 w-6 items-center justify-center rounded-full bg-[#656762]"><MdKeyboardArrowUp size={19} className="text-white" /></div>
      <svg viewBox="0 0 30 44" className="absolute left-[308px] top-[62px] h-[44px] w-[30px]"><path d="M4 10L18 0l10 22-8 20L3 36z" fill="#58563f" fillOpacity=".5" /></svg>
    </div>
  );
}

export default function App() {
  return (
    <div className="relative h-[767px] w-[1365px] overflow-hidden bg-[#fafafa] font-['Noto_Sans',sans-serif]">
      <BrowserChrome />
      <TitleBar />
      <ToolBar />
      <div className="flex"><Viewport /><Sidebar /></div>
      <div className="absolute left-[3px] top-[763px] h-[40px] w-[1358px] rounded-[18px] bg-[#404340]" />
      <Notification />
    </div>
  );
}
